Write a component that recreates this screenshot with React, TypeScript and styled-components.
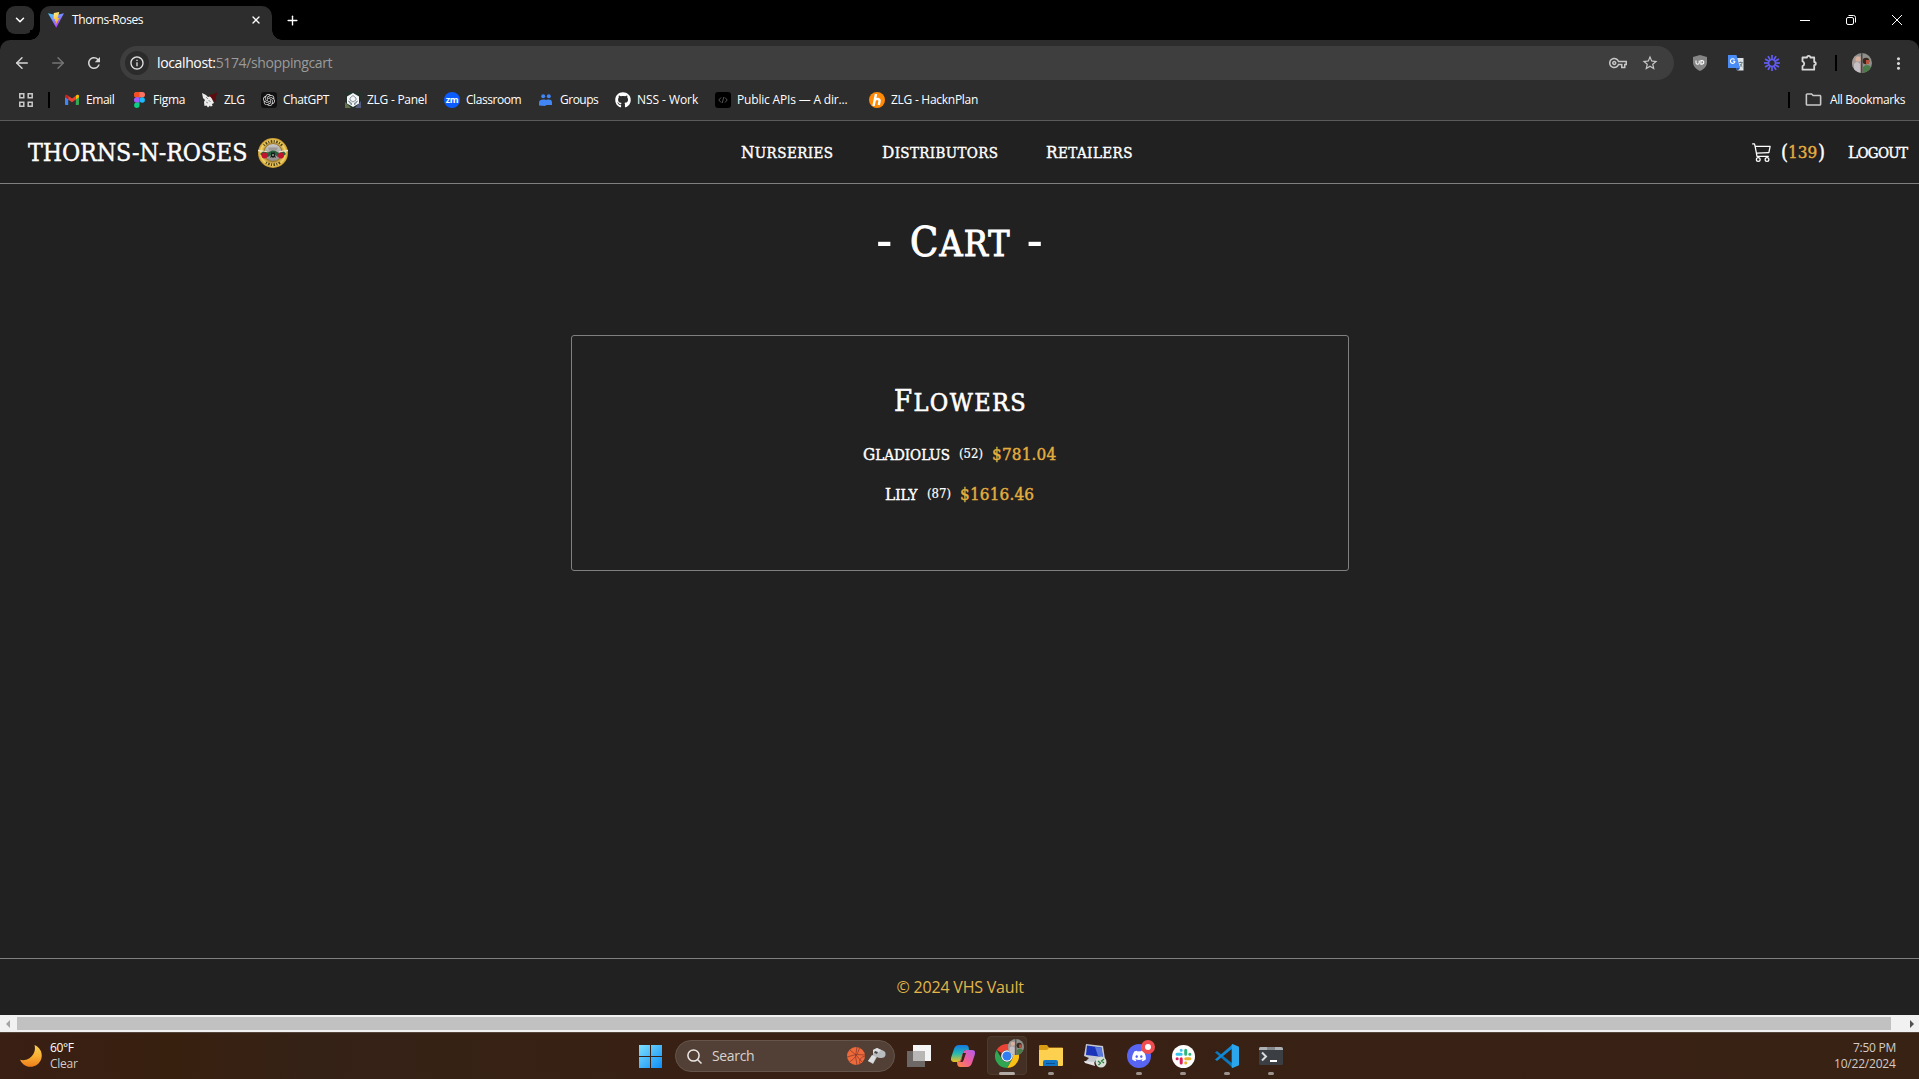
import React from "react";
import styled, { createGlobalStyle, css } from "styled-components";
import { ArrowLeft, ArrowRight, ChevronDown, Plus, X } from "lucide-react";
import { FaGithub, FaDiscord } from "react-icons/fa";
import { SiOpenai } from "react-icons/si";
import { MdOutlineVpnKey, MdStarOutline, MdOutlineFolder, MdRefresh, MdMoreVert, MdInfoOutline } from "react-icons/md";
import { BsCart3 } from "react-icons/bs";

const slab = `"DejaVu Serif Condensed", "DejaVu Serif", serif`;
const ui = `"Open Sans", "Noto Sans", sans-serif`;

const Global = createGlobalStyle`
  * { box-sizing: border-box; }
  html, body { margin: 0; background: #212121; overflow: hidden; }
  svg { display: block; flex: none; }
`;

const Screen = styled.div`
  width: 1919px;
  height: 1079px;
  display: flex;
  flex-direction: column;
  color: #fff;
  font: 12px/16px ${ui};
  background: #212121;
`;

const Label = styled.span<{ $w: number; $ls?: number }>`
  display: block;
  flex: none;
  width: ${(p) => p.$w}px;
  letter-spacing: ${(p) => p.$ls ?? 0}px;
  white-space: nowrap;
`;

/* slab lettering whose first letter is a full capital, the rest slightly smaller */
const Slab = styled(Label)<{ $size: number; $cap?: number; $stroke?: number }>`
  font-family: ${slab};
  font-size: ${(p) => p.$size}px;
  line-height: 1.2;
  text-transform: uppercase;
  -webkit-text-stroke: ${(p) => p.$stroke ?? 0.4}px currentColor;
  ${(p) => p.$cap && css`&::first-letter { font-size: ${p.$cap}px; }`}
`;

const TabStrip = styled.div`
  height: 40px;
  display: flex;
  align-items: flex-end;
  background: #000;
`;
const TabSearch = styled.div`
  width: 28px;
  height: 28px;
  margin: 0 6px 6px;
  border-radius: 9px;
  background: #2d2d2d;
  display: grid;
  place-items: center;
`;
const Tab = styled.div`
  position: relative;
  width: 232px;
  height: 34px;
  padding: 0 10px 6px 8px;
  border-radius: 10px 10px 0 0;
  background: #2d2d2d;
  display: flex;
  align-items: center;
  gap: 8px;
  &::before, &::after {
    content: "";
    position: absolute;
    bottom: 0;
    width: 10px;
    height: 10px;
  }
  &::before { left: -10px; background: radial-gradient(circle at 0 0, #000 9.5px, #2d2d2d 10px); }
  &::after { right: -10px; background: radial-gradient(circle at 100% 0, #000 9.5px, #2d2d2d 10px); }
  & > :last-child { margin-left: auto; }
`;
const NewTab = styled.div`
  height: 40px;
  width: 40px;
  display: grid;
  place-items: center;
`;
const WindowButtons = styled.div`
  height: 40px;
  margin-left: auto;
  display: flex;
  align-items: center;
  gap: 36px;
  padding-right: 17px;
`;
const ToolbarBack = styled.div`background: #000;`;
const Toolbar = styled.div`
  height: 46px;
  display: flex;
  align-items: center;
  background: #2d2d2d;
  border-radius: 10px 10px 0 0;
  padding-left: 13px;
`;
const NavIcons = styled.div`
  width: 107px;
  flex: none;
  display: flex;
  gap: 18px;
  color: #d6d6d6;
`;
const Omnibox = styled.div`
  width: 1554px;
  flex: none;
  height: 34px;
  border-radius: 17px;
  background: #3e3e3e;
  display: flex;
  align-items: center;
  padding: 0 15px 0 5px;
  font-size: 14px;
  color: #9b9b9b;
  & b { font-weight: 400; color: #fff; }
`;
const InfoDot = styled.div`
  width: 24px;
  height: 24px;
  margin-right: 8px;
  border-radius: 50%;
  background: #2b2b2b;
  color: #e0e0e0;
  display: grid;
  place-items: center;
`;
const OmniEnd = styled.div`
  margin-left: auto;
  display: flex;
  align-items: center;
  gap: 14px;
  color: #c7c7c7;
`;
const Extensions = styled.div`
  display: flex;
  align-items: center;
  margin-left: 8px;
  color: #d8d8d8;
`;
const ExtSlot = styled.div<{ $w?: number }>`
  width: ${(p) => p.$w ?? 36}px;
  flex: none;
  display: flex;
  justify-content: center;
`;
const Divider = styled.div`
  width: 2px;
  height: 16px;
  background: #000;
`;
const Bookmarks = styled.div`
  height: 35px;
  padding: 0 14px 7px 19px;
  display: flex;
  align-items: center;
  background: #2d2d2d;
  border-bottom: 1px solid #5b5b5b;
`;
const AppsGrid = styled.div`
  width: 45px;
  flex: none;
  display: flex;
  align-items: center;
  gap: 15px;
`;
const Bookmark = styled.div<{ $w: number }>`
  width: ${(p) => p.$w}px;
  flex: none;
  display: flex;
  align-items: center;
  gap: 6px;
`;
const Favicon = styled.div<{ $bg?: string; $round?: string }>`
  width: 16px;
  height: 16px;
  flex: none;
  background: ${(p) => p.$bg ?? "transparent"};
  border-radius: ${(p) => p.$round ?? "0"};
  display: grid;
  place-items: center;
  font: 700 9px/14px "Open Sans", sans-serif;
  letter-spacing: -0.4px;
`;
const AllBookmarks = styled.div`
  margin-left: auto;
  display: flex;
  align-items: center;
  gap: 14px;
`;
const FolderLabel = styled.div`
  display: flex;
  align-items: center;
  gap: 7px;
`;

const SiteHeader = styled.header`
  height: 63px;
  padding: 0 11px 0 28px;
  border-bottom: 1px solid #808080;
  display: grid;
  grid-template-columns: 713px 1fr auto;
  align-items: center;
`;
const Brand = styled.div`
  display: flex;
  align-items: center;
  gap: 11px;
  padding-top: 2px;
`;
const SiteNav = styled.nav`
  display: flex;
  gap: 48px;
`;
const Account = styled.div`
  display: flex;
  align-items: center;
`;
const CartCount = styled.div`
  display: flex;
  align-items: center;
  margin: 0 23px 0 9px;
`;
const Gold = styled(Slab)`color: #e4ae3f;`;

const Main = styled.main`
  flex: 1;
  display: flex;
  flex-direction: column;
  align-items: center;
`;
const Title = styled.h1`
  margin: 33px 0 66px;
  height: 52px;
  width: 167px;
  display: flex;
  align-items: center;
  justify-content: space-between;
  font-weight: 400;
`;
const Dash = styled.span`
  font: 54px/52px ${slab};
  height: 56px;
`;
const Card = styled.section`
  width: 778px;
  height: 236px;
  border: 1px solid #808080;
  border-radius: 3px;
  padding: 46px 0 0 1px;
  display: flex;
  flex-direction: column;
  align-items: center;
`;
const CardTitle = styled.div`
  height: 38px;
  margin-bottom: 14px;
  display: flex;
  align-items: center;
`;
const Item = styled.div`
  height: 40px;
  display: flex;
  align-items: center;
  gap: 9px;
`;

const Footer = styled.footer`
  height: 57px;
  padding-left: 1px;
  border-top: 1px solid #808080;
  display: flex;
  align-items: center;
  justify-content: center;
  font-size: 16px;
  line-height: 24px;
  color: #e4b649;
`;
const ScrollBar = styled.div`
  height: 17px;
  background: #f1f1f1;
  display: flex;
  align-items: center;
`;
const Arrow = styled.div<{ $right?: boolean }>`
  width: ${(p) => (p.$right ? 28 : 17)}px;
  padding: ${(p) => (p.$right ? "0 5px 0 19px" : "0 0 0 6px")};
`;
const Thumb = styled.div`
  flex: 1;
  height: 13px;
  background: #c1c1c1;
`;

const Taskbar = styled.div`
  height: 47px;
  border-top: 1px solid #55443a;
  background: linear-gradient(90deg, #391f14 0, #38200f 9%, #352216 16%, #382114 35%, #382214 100%);
  display: grid;
  grid-template-columns: 639px 1fr auto;
`;
const Weather = styled.div`
  display: flex;
  align-items: center;
  gap: 8px;
  padding-left: 20px;
`;
const Lines = styled.div<{ $right?: boolean }>`
  display: flex;
  flex-direction: column;
  align-items: ${(p) => (p.$right ? "flex-end" : "flex-start")};
  color: #d3cbc6;
`;
const Bright = styled(Label)`color: #fff;`;
const Apps = styled.div`
  display: flex;
  align-items: center;
`;
const SearchBox = styled.div`
  width: 220px;
  height: 32px;
  margin: 0 2px 0 13px;
  padding: 0 8px 0 11px;
  border: 1px solid #65544a;
  border-radius: 16px;
  background: #524036;
  display: flex;
  align-items: center;
  gap: 3px;
  font-size: 14px;
  color: #d9d2ce;
  & > span { margin: 0 auto 0 7px; }
`;
const AppSlot = styled.div<{ $active?: boolean }>`
  position: relative;
  width: 44px;
  height: 46px;
  display: grid;
  place-items: center;
  &::before {
    content: "";
    position: absolute;
    inset: 3px 2px 4px 2px;
    border-radius: 4px;
    ${(p) => p.$active && css`background: #432f23; border: 1px solid #4d3a2f;`}
  }
  & > svg { position: relative; }
`;
const Running = styled.i<{ $wide?: boolean }>`
  position: absolute;
  bottom: 4px;
  left: ${(p) => (p.$wide ? 14 : 19)}px;
  width: ${(p) => (p.$wide ? 16 : 6)}px;
  height: 3px;
  border-radius: 2px;
  background: ${(p) => (p.$wide ? "#b3aba6" : "#9c928c")};
`;
const Clock = styled.div`
  display: flex;
  align-items: center;
  padding-right: 23px;
`;

const Vite = () => (
  <svg width="16" height="16" viewBox="0 0 16 16">
    <defs>
      <linearGradient id="vt" x1="0" y1="0" x2=".6" y2="1"><stop stopColor="#41d1ff" /><stop offset="1" stopColor="#bd34fe" /></linearGradient>
      <linearGradient id="vb" x1=".4" y1="0" x2=".6" y2="1"><stop stopColor="#ffea83" /><stop offset="1" stopColor="#ffa800" /></linearGradient>
    </defs>
    <path d="M0 1.3 8.2 15.8 16 1.3 8 3z" fill="url(#vt)" />
    <path d="M11.3 0 5.8 1.1 5.5 7.2l1.8-.3-.5 2.5 1.4-.4-.8 4 4-7-1.9.3z" fill="url(#vb)" />
  </svg>
);
const Gmail = () => (
  <svg width="14" height="14" viewBox="0 0 14 14">
    <path d="M0 3v8.2c0 .5.4.8.8.8h2.4V6.2z" fill="#4285f4" />
    <path d="M14 3v8.2c0 .5-.4.8-.8.8h-2.4V6.2z" fill="#34a853" />
    <path d="M3.2 6.4 7 9.2l3.800-2.800V2.700L7 5.600 3.200 2.700z" fill="#ea4335" />
    <path d="M0 3.200C0 1.800 1.500 1.400 2.400 2l.8.7v3.700L0 4.200z" fill="#c5221f" />
    <path d="M14 3.200c0-1.400-1.500-1.800-2.400-1.200l-.8.7v3.700L14 4.200z" fill="#fbbc04" />
  </svg>
);
const Figma = () => (
  <svg width="11" height="16" viewBox="0 0 11 16">
    <rect width="11" height="5.4" rx="2.7" fill="#ff7262" />
    <path d="M5.5 0H2.7a2.7 2.7 0 0 0 0 5.4h2.8z" fill="#f24e1e" />
    <path d="M5.5 5.3H2.7a2.7 2.7 0 0 0 0 5.4h2.8z" fill="#a259ff" />
    <circle cx="8.2" cy="8" r="2.7" fill="#1abcfe" />
    <path d="M5.5 10.6H2.7a2.7 2.7 0 1 0 2.8 2.7z" fill="#0acf83" />
  </svg>
);
const Zlg = () => (
  <svg width="16" height="16" viewBox="0 0 16 16">
    <path d="m0 1 4 2 2 2 4-1 .5 4 1.500 3-2 1 .5 2-2 .5-.5-1-2 2-1.500-2-2 .5L2 10l1-2-2-2z" fill="#ececec" />
    <path d="m7 3 5-1 4-2-2 4-.5 6-3-2.500z" fill="#5f0a0c" />
    <path d="m4 5 2 2M6.500 8.500l2 1M4 10l2 1" stroke="#666" strokeWidth=".7" />
  </svg>
);
const Panel = () => (
  <svg width="16" height="16" viewBox="0 0 16 16">
    <rect width="16" height="16" fill="#23312d" /><path d="M0 16v-6l6 6z" fill="#61734b" /><path d="M10 16 16 9v7z" fill="#535a80" />
    <path d="M8 1 14 4.500v7L8 15l-6-3.500v-7z" fill="#f4f6f7" />
    <path d="m5 6 3-2.500L11 6v2L8 10 5 8zM3.500 9l3 2v2zM12.500 9l-3 2v2z" fill="none" stroke="#84949c" />
  </svg>
);
const GroupsIcon = () => (
  <svg width="14" height="12" viewBox="0 0 14 12" fill="#4285f4">
    <circle cx="4.200" cy="2.200" r="2" /><circle cx="9.800" cy="2.200" r="2" />
    <path d="M0 11.500V8.500C0 6.500 1.800 5.400 4.200 5.400S7 6 7 6s.6-.6 2.800-.6S13 6.500 13 8.500V11H7.500L6 12z" />
  </svg>
);
const Roses = () => (
  <svg width="30" height="30" viewBox="0 0 30 30">
    <defs>
      <radialGradient id="gold"><stop offset=".6" stopColor="#b8913a" /><stop offset=".82" stopColor="#f3d566" /><stop offset="1" stopColor="#c1922b" /></radialGradient>
      <linearGradient id="steel" x1="0" y1="0" x2="0" y2="1"><stop stopColor="#c9c9c9" /><stop offset="1" stopColor="#8d8984" /></linearGradient>
    </defs>
    <circle cx="15" cy="15" r="15" fill="url(#gold)" />
    <path d="M6 7.500A11.800 11.800 0 0 1 24 7.500M8 24.500a11.800 11.800 0 0 0 14 0" fill="none" stroke="#54431a" strokeWidth="2.600" strokeDasharray="1.100 1.400 1.600 1.300" />
    <circle cx="15" cy="14.500" r="9" fill="url(#steel)" stroke="#9a782b" />
    <path d="M10 9.500h10l-1.500 3h-7z" fill="#9c9995" />
    <path d="M0 12.500 9 14M30 12.500 21 14" stroke="#eee6c4" strokeWidth="1.300" />
    <path d="M2 16 5 13.500l5 1 4-2 3 .2 4 2.300 5-1.500 2 2.500-3 2.500-5 .5-4-3-3 1-3 2-5-.5z" fill="#27603c" />
    <circle cx="6.500" cy="17.500" r="3" fill="#c0142f" /><circle cx="23" cy="17.500" r="3" fill="#c0142f" />
    <path d="m12.300 20 1.200-6 1.500 1 1.500-1 1.200 6-1.500-1-1.200 1-1.200-1z" fill="#141c17" />
    <path d="M14.500 16h1v2h-1z" fill="#d9e0d8" />
  </svg>
);
const Puzzle = () => (
  <svg width="16" height="18" viewBox="0 0 16 18" fill="none" stroke="#d8d8d8" strokeWidth="1.800" strokeLinejoin="round">
    <path d="M1.500 3.500H6a1.700 1.700 0 0 1 3.400 0h3.800V8a1.600 1.600 0 0 1 0 3.200v4.500H1.500V12a2.400 2.400 0 0 0 0-4.600z" />
  </svg>
);
const Shield = () => (
  <svg width="16" height="16" viewBox="0 0 16 16">
    <path d="M8 0 15 2v5c0 4-2.500 7-7 9-4.500-2-7-5-7-9V2z" fill="#858585" />
    <path d="M4 5.500v2.300q0 1.400 1.600 1.400T7.200 7.800V5.500M8.900 5.600v3.500h.8q2.100 0 2.100-1.800T9.700 5.600z" fill="none" stroke="#fff" strokeWidth="1.100" />
  </svg>
);
const TranslateIcon = () => (
  <svg width="16" height="16" viewBox="0 0 16 16">
    <path d="M6 3h9.500v12.500H9z" fill="#dfe2e4" /><path d="M0 0h8.500L12 13H0z" fill="#4a8cf5" /><path d="m8 13 1.500 3 2.500-3z" fill="#2454b9" />
    <path d="M7 6.200H5M6.500 4.600a2.300 2.300 0 1 0 .5 1.600" stroke="#fff" strokeWidth="1.100" fill="none" />
    <path d="M10.800 7.500h4M12.800 6.500v1M14 8q-.8 3-2.500 4M12 9q1 2 2.500 3" stroke="#687b80" strokeWidth=".9" fill="none" />
  </svg>
);
const Loom = () => (
  <svg width="16" height="16" viewBox="-8 -8 16 16" stroke="#625df5" strokeWidth="1.700">
    {Array.from({ length: 12 }, (_, i) => <path key={i} d="M0-3V-8" transform={`rotate(${i * 30})`} />)}
    <circle r="3.300" fill="none" strokeWidth="1.300" />
  </svg>
);
const Avatar = ({ size }: { size: number }) => (
  <svg width={size} height={size} viewBox="0 0 20 20">
    <defs><clipPath id={`av${size}`}><circle cx="10" cy="10" r="10" /></clipPath></defs>
    <g clipPath={`url(#av${size})`}>
      <rect width="20" height="20" fill="#8f8f8c" /><path d="M0 3h9v17H0z" fill="#a59a98" /><path d="M9 0h1.500v20H9z" fill="#4f4540" />
      <circle cx="6" cy="6" r="2.600" fill="#d8b09c" /><circle cx="14" cy="8" r="3.300" fill="#3a2822" /><path d="M14 7h3v4h-3z" fill="#b4553b" />
      <path d="M11 14q4-4 8 0v6h-8z" fill="#4b7b48" /><path d="M2 11q3-4 6 0v9H2z" fill="#c4bfc5" />
    </g>
  </svg>
);
const Moon = () => (
  <svg width="22" height="22" viewBox="0 0 22 22">
    <defs><linearGradient id="mn" x1="0" y1="0" x2="0" y2="1"><stop stopColor="#f8cf55" /><stop offset=".5" stopColor="#f9b133" /><stop offset="1" stopColor="#ee7d1b" /></linearGradient></defs>
    <path d="M14.500 0A11.300 11.300 0 1 1 0 14.800 12 12 0 0 0 14.500 0z" fill="url(#mn)" />
  </svg>
);
const Windows = () => (
  <svg width="23" height="23" viewBox="0 0 23 23">
    <defs><linearGradient id="wn" gradientUnits="userSpaceOnUse" x1="0" y1="0" x2="23" y2="23"><stop stopColor="#7fe0fd" /><stop offset="1" stopColor="#0d8df5" /></linearGradient></defs>
    <path d="M0 0h11v11H0zM12 0h11v11H12zM0 12h11v11H0zM12 12h11v11H12z" fill="url(#wn)" />
  </svg>
);
const SearchGlyph = () => (
  <svg width="15" height="15" viewBox="0 0 15 15" fill="none" stroke="#ece7e4" strokeWidth="1.500"><circle cx="6.500" cy="6.500" r="5.600" /><path d="m10.500 10.500 4 4" /></svg>
);
const Ball = () => (
  <svg width="18" height="18" viewBox="0 0 18 18"><circle cx="9" cy="9" r="9" fill="#f0693a" /><path d="M3 3q6 4 12 12M10 0q-3 9 0 18M0 10q9-4 18-2M2.500 15q7-4 10-14M13 17q-2-6 5-8" fill="none" stroke="#8c3d2e" strokeWidth=".8" /></svg>
);
const Whistle = () => (
  <svg width="18" height="16" viewBox="0 0 18 16"><path d="m5 2 4-2 7 3q2 1 1.500 4-.5 3-4.500 3-3 0-4-1l-4 7-5-3L5 7z" fill="#b9bcbf" /><path d="m5 2 4-2 4 2-4 4-4-1zM0 13l4-6 4 2-3 6z" fill="#dcdddf" /><path d="m7 3 3 1-1 2-3-1z" fill="#44444a" /></svg>
);
const TaskView = () => (
  <svg width="24" height="22" viewBox="0 0 24 22"><path d="M6 0h18v16H6z" fill="#f5f5f5" /><path d="M0 6h18v16H0z" fill="#6d6866" /><path d="M6 6h12v10H6z" fill="#b9b7b5" /></svg>
);
const Copilot = () => (
  <svg width="24" height="22" viewBox="0 0 24 22">
    <defs>
      <linearGradient id="ca" x1="0" y1="0" x2="0" y2="1"><stop stopColor="#1478e2" /><stop offset=".5" stopColor="#25b9b1" /><stop offset="1" stopColor="#f3c01d" /></linearGradient>
      <linearGradient id="cb" x1="1" y1="0" x2="0" y2="1"><stop stopColor="#ad5cf0" /><stop offset=".5" stopColor="#ef5c9c" /><stop offset="1" stopColor="#fd8a3d" /></linearGradient>
    </defs>
    <path d="M8 0h7q2 0 2.600 2L18 5h-3q-2 0-2.800 2.500L10 14q-1 3-4 3H3q-4 0-2.700-5L3 4Q4.300 0 8 0z" fill="url(#ca)" />
    <path d="M16 22H9q-2 0-2.600-2L6 17q3 0 4-3l2.200-6.500Q13 5 15 5h6q4 0 2.700 5L21 18q-1.300 4-5 4z" fill="url(#cb)" />
    <path d="M12 8h3l-2.500 7.500q-.5 1.500-2 1.500H9q1-1 1.500-2.500z" fill="#3a2116" />
  </svg>
);
const Chrome = () => (
  <svg width="24" height="24" viewBox="-12 -12 24 24">
    <path d="M-10.400-6A12 12 0 0 1 10.400-6H0a6 6 0 0 0-5.200 3z" fill="#e94335" />
    <path d="M10.400-6A12 12 0 0 1 0 12L5.200 3A6 6 0 0 0 0-6z" fill="#fbc116" />
    <path d="M0 12A12 12 0 0 1-10.400-6l5.200 9A6 6 0 0 0 5.200 3z" fill="#30a552" />
    <circle r="5.800" fill="#fff" /><circle r="4.600" fill="#2f7df0" />
  </svg>
);
const ChromeBadge = styled.div`
  position: absolute;
  top: 6px;
  left: 23px;
`;
const Explorer = () => (
  <svg width="24" height="22" viewBox="0 0 24 22"><path d="M0 1q0-1 1-1h7l2 2.500h13q1 0 1 1V8H0z" fill="#d99a14" /><path d="M0 5h8l2-2h14v17q0 1-1 1H1q-1 0-1-1z" fill="#fdd04f" /><path d="M4 21v-4q0-2 2-2h11q2 0 2 2v4z" fill="#1377c8" /><path d="M7 18h9v1H7z" fill="#0a4f91" /></svg>
);
const Remote = () => (
  <svg width="23" height="24" viewBox="0 0 23 24"><path d="M2 0 19 2l2 13-9 1-2 3-9-1 4-4-5-2z" fill="#c7c9d1" /><path d="m3 1.500 14.500 2L19 13 2 11z" fill="#1c35b8" /><path d="m11 3 6.500.6L19 13l-5-1z" fill="#5878de" /><path d="m0 17 10 1 1 4-10-3z" fill="#e4e4e6" /><circle cx="17" cy="18" r="5.500" fill="#d6dfd6" /><path d="m14 17 2.500 2-2 2M20 15l-2.500 2 2.500 2" stroke="#247838" fill="none" strokeWidth="1.200" /></svg>
);
const Discord = () => (
  <svg width="32" height="32" viewBox="-4 0 32 32">
    <circle cx="12" cy="16" r="12" fill="#5865f2" />
    <g transform="translate(4.500 8.500)"><FaDiscord size={15} color="#fff" /></g>
    <circle cx="21" cy="7" r="7" fill="#f04d50" /><circle cx="21" cy="7" r="3" fill="#fff" />
  </svg>
);
const Slack = () => (
  <svg width="23" height="23" viewBox="0 0 23 23" strokeWidth="3" strokeLinecap="round">
    <circle cx="11.500" cy="11.500" r="11.500" fill="#fff" />
    <path d="M9.200 5.200v.1M5 9.300h4.200" stroke="#36c5f0" /><path d="M13.700 5.200v4.100M17.800 9.300h.1" stroke="#2eb67d" />
    <path d="M13.700 13.700h4.200M13.700 17.800v.1" stroke="#ecb22e" /><path d="M9.200 13.700v4.200M5.100 13.700h.1" stroke="#e01e5a" />
  </svg>
);
const Code = () => (
  <svg width="24" height="24" viewBox="0 0 24 24"><path d="M0 8.500 2 7l16 13v4z" fill="#0b77bd" /><path d="M0 15.500 2 17 18 4V0z" fill="#1289d4" /><path d="m17.500 0 6 2.500q.5.300.5 1v17q0 .7-.5 1l-6 2.500q-.8 0-.8-1.500v-21Q16.700 0 17.500 0z" fill="#2aa5ee" /></svg>
);
const Terminal = () => (
  <svg width="24" height="18" viewBox="0 0 24 18"><rect width="24" height="18" rx="1.500" fill="#3b3f43" /><path d="M0 3V1.500Q0 0 1.500 0H22q2 0 2 1.500V3z" fill="#aeb1b3" /><path d="M8 0h8v3H8z" fill="#85888b" /><path d="m3 5.500 4 4-4 4" fill="none" stroke="#d8dadb" strokeWidth="2" /><path d="M11 14h7" stroke="#fff" strokeWidth="2" /></svg>
);
const CodeTag = () => (
  <svg width="10" height="8" viewBox="0 0 10 8" fill="none" stroke="#555"><path d="M3 1.500.800 4 3 6.500M7 1.500 9.200 4 7 6.500M5.800 1 4.200 7" /></svg>
);
const Hack = () => (
  <svg width="10" height="12" viewBox="0 0 10 12" fill="none" stroke="#fff" strokeWidth="2.400"><path d="M4 0 1.500 12M2.500 7Q4 4.500 6 5t1.500 2.500L6.800 11" /></svg>
);

interface BookmarkItem {
  name: string;
  textWidth: number;
  slot: number;
  spacing: number;
  icon: React.ReactNode;
  bg?: string;
  round?: string;
}
const bookmarks: BookmarkItem[] = [
  { name: "Email", textWidth: 28, slot: 67, spacing: -0.45, icon: <Gmail /> },
  { name: "Figma", textWidth: 32, slot: 71, spacing: -0.25, icon: <Figma /> },
  { name: "ZLG", textWidth: 20, slot: 59, spacing: -0.5, icon: <Zlg /> },
  { name: "ChatGPT", textWidth: 46, slot: 84, spacing: -0.33, icon: <SiOpenai size={12} color="#ddd" />, bg: "#111", round: "3px" },
  { name: "ZLG - Panel", textWidth: 60, slot: 99, spacing: -0.26, icon: <Panel /> },
  { name: "Classroom", textWidth: 55, slot: 94, spacing: -0.45, icon: "zm", bg: "#0b5cff", round: "50%" },
  { name: "Groups", textWidth: 38, slot: 77, spacing: -0.5, icon: <GroupsIcon /> },
  { name: "NSS - Work", textWidth: 61, slot: 100, spacing: -0.06, icon: <FaGithub size={16} /> },
  { name: "Public APIs — A dir...", textWidth: 110, slot: 154, spacing: -0.18, icon: <CodeTag />, bg: "#000", round: "3px" },
  { name: "ZLG - HacknPlan", textWidth: 87, slot: 120, spacing: -0.27, icon: <Hack />, bg: "#ff8a05", round: "50%" },
];

export default function App() {
  return (
    <Screen>
      <Global />
      <TabStrip>
        <TabSearch><ChevronDown size={14} strokeWidth={2.600} /></TabSearch>
        <Tab><Vite /><Label $w={71} $ls={-0.39}>Thorns-Roses</Label><X size={12} strokeWidth={2.600} /></Tab>
        <NewTab><Plus size={15} strokeWidth={2.200} /></NewTab>
        <WindowButtons>
          <svg width="10" height="10"><path d="M0 5.500h10" stroke="#fff" /></svg>
          <svg width="10" height="10" fill="none" stroke="#fff"><rect x=".5" y="2.500" width="7" height="7" rx="1.500" /><path d="M2.500.5h5q2 0 2 2v5" /></svg>
          <svg width="10" height="10" stroke="#fff"><path d="m0 0 10 10M10 0 0 10" /></svg>
        </WindowButtons>
      </TabStrip>
      <ToolbarBack>
        <Toolbar>
          <NavIcons><ArrowLeft size={18} /><ArrowRight size={18} color="#747474" /><MdRefresh size={18} /></NavIcons>
          <Omnibox>
            <InfoDot><MdInfoOutline size={16} /></InfoDot>
            <Label $w={175} $ls={-0.37}><b>localhost:</b>5174/shoppingcart</Label>
            <OmniEnd><MdOutlineVpnKey size={18} /><MdStarOutline size={18} /></OmniEnd>
          </Omnibox>
          <Extensions>
            <ExtSlot><Shield /></ExtSlot><ExtSlot><TranslateIcon /></ExtSlot><ExtSlot><Loom /></ExtSlot><ExtSlot $w={38}><Puzzle /></ExtSlot>
            <ExtSlot $w={16}><Divider /></ExtSlot><ExtSlot><Avatar size={20} /></ExtSlot><ExtSlot><MdMoreVert size={19} /></ExtSlot>
          </Extensions>
        </Toolbar>
      </ToolbarBack>
      <Bookmarks>
        <AppsGrid>
          <svg width="14" height="14" fill="none" stroke="#c9c9c9" strokeWidth="1.500"><path d="M.8.8h4v4h-4zM9.200.8h4v4h-4zM.8 9.200h4v4h-4zM9.200 9.200h4v4h-4z" /></svg>
          <Divider />
        </AppsGrid>
        {bookmarks.map((b) => (
          <Bookmark key={b.name} $w={b.slot}>
            <Favicon $bg={b.bg} $round={b.round}>{b.icon}</Favicon>
            <Label $w={b.textWidth} $ls={b.spacing}>{b.name}</Label>
          </Bookmark>
        ))}
        <AllBookmarks>
          <Divider />
          <FolderLabel><MdOutlineFolder size={19} color="#c9c9c9" /><Label $w={75} $ls={-0.38}>All Bookmarks</Label></FolderLabel>
        </AllBookmarks>
      </Bookmarks>

      <SiteHeader>
        <Brand><Slab $w={219} $size={24.700} $ls={-0.1}>Thorns-n-Roses</Slab><Roses /></Brand>
        <SiteNav>
          <Slab $w={93} $size={15} $cap={17} $ls={0.43}>Nurseries</Slab>
          <Slab $w={116} $size={15} $cap={17} $ls={0.35}>Distributors</Slab>
          <Slab $w={87} $size={15} $cap={17} $ls={0.45}>Retailers</Slab>
        </SiteNav>
        <Account>
          <BsCart3 size={20} />
          <CartCount><Slab $w={7} $size={20}>(</Slab><Gold $w={30} $size={17}>139</Gold><Slab $w={7} $size={20}>)</Slab></CartCount>
          <Slab $w={60} $size={15} $cap={17} $ls={-0.7}>Logout</Slab>
        </Account>
      </SiteHeader>

      <Main>
        <Title><Dash>-</Dash><Slab $w={99} $size={35.500} $cap={41} $ls={1.200} $stroke={1}>Cart</Slab><Dash>-</Dash></Title>
        <Card>
          <CardTitle><Slab $w={132} $size={25} $cap={29} $ls={1.400} $stroke={0.6}>Flowers</Slab></CardTitle>
          <Item><Slab $w={87} $size={15} $cap={17}>Gladiolus</Slab><Slab $w={24} $size={13} $stroke={0.2}>(52)</Slab><Gold $w={65} $size={17} $ls={0.15}>$781.04</Gold></Item>
          <Item><Slab $w={33} $size={15} $cap={17}>Lily</Slab><Slab $w={24} $size={13} $stroke={0.2}>(87)</Slab><Gold $w={75} $size={17} $ls={0.15}>$1616.46</Gold></Item>
        </Card>
      </Main>

      <Footer><Label $w={127} $ls={-0.2}>© 2024 VHS Vault</Label></Footer>
      <ScrollBar>
        <Arrow><svg width="4" height="8"><path d="M4 0v8L0 4z" fill="#a3a3a3" /></svg></Arrow>
        <Thumb />
        <Arrow $right><svg width="4" height="8"><path d="M0 0v8l4-4z" fill="#505050" /></svg></Arrow>
      </ScrollBar>
      <Taskbar>
        <Weather><Moon /><Lines><Bright $w={24} $ls={-0.4}>60°F</Bright><Label $w={28} $ls={-0.25}>Clear</Label></Lines></Weather>
        <Apps>
          <Windows />
          <SearchBox><SearchGlyph /><Label $w={42} $ls={-0.35}>Search</Label><Ball /><Whistle /></SearchBox>
          <AppSlot><TaskView /></AppSlot>
          <AppSlot><Copilot /></AppSlot>
          <AppSlot $active><Chrome /><ChromeBadge><Avatar size={16} /></ChromeBadge><Running $wide /></AppSlot>
          <AppSlot><Explorer /><Running /></AppSlot>
          <AppSlot><Remote /></AppSlot>
          <AppSlot><Discord /><Running /></AppSlot>
          <AppSlot><Slack /><Running /></AppSlot>
          <AppSlot><Code /><Running /></AppSlot>
          <AppSlot><Terminal /><Running /></AppSlot>
        </Apps>
        <Clock><Lines $right><Label $w={43} $ls={-0.28}>7:50 PM</Label><Label $w={62} $ls={-0.2}>10/22/2024</Label></Lines></Clock>
      </Taskbar>
    </Screen>
  );
}
